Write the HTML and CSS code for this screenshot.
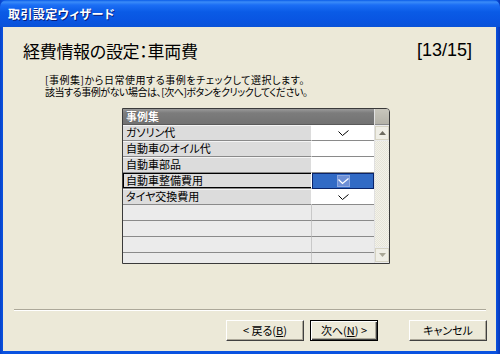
FILE: index.html
```html
<!DOCTYPE html>
<html lang="ja">
<head>
<meta charset="utf-8">
<link rel="stylesheet" href="styles.css">
</head>
<body>
<div class="window">
  <div class="titlebar">取引設定ウィザード</div>
  <div class="client">
    <div class="heading">
      <span class="heading-title">経費情報の設定：車両費</span>
      <span class="heading-step">[13/15]</span>
    </div>
    <p class="instructions"><span class="line line-1">[事例集]から日常使用する事例をチェックして選択します。</span><span class="line line-2">該当する事例がない場合は、[次へ]ボタンをクリックしてください。</span></p>
    <div class="grid">
      <div class="table">
        <div class="row header"><div class="cell name">事例集</div><div class="cell check"></div></div>
        <div class="row data"><div class="cell name">ガソリン代</div><div class="cell check"><svg class="tick" viewBox="0 0 11 7" width="11" height="7"><polyline points="0.5,1.5 4.5,5.5 10.5,0.5" fill="none" stroke="#000" stroke-width="1"/></svg></div></div>
        <div class="row data"><div class="cell name">自動車のオイル代</div><div class="cell check"></div></div>
        <div class="row data"><div class="cell name">自動車部品</div><div class="cell check"></div></div>
        <div class="row data selected"><div class="cell name">自動車整備費用</div><div class="cell check"><span class="checkbox"><svg viewBox="0 0 11 7" width="11" height="7"><polyline points="0.5,1.5 4.5,5.5 10.5,0.5" fill="none" stroke="#fff" stroke-width="1.2"/></svg></span></div></div>
        <div class="row data"><div class="cell name">タイヤ交換費用</div><div class="cell check"><svg class="tick" viewBox="0 0 11 7" width="11" height="7"><polyline points="0.5,1.5 4.5,5.5 10.5,0.5" fill="none" stroke="#000" stroke-width="1"/></svg></div></div>
        <div class="row empty"><div class="cell name"></div><div class="cell check"></div></div>
        <div class="row empty"><div class="cell name"></div><div class="cell check"></div></div>
        <div class="row empty"><div class="cell name"></div><div class="cell check"></div></div>
        <div class="row empty last"><div class="cell name"></div><div class="cell check"></div></div>
      </div>
      <div class="scrollbar">
        <div class="sb-corner"></div>
        <div class="sb-btn"><svg viewBox="0 0 7 4" width="7" height="4"><polygon points="0,4 3.5,0 7,4" fill="#6d6b60"/></svg></div>
        <div class="sb-track"></div>
        <div class="sb-btn"><svg viewBox="0 0 7 4" width="7" height="4"><polygon points="0,0 3.5,4 7,0" fill="#a9a797"/></svg></div>
      </div>
    </div>
    <div class="separator"></div>
    <div class="buttons">
      <button class="btn btn-back">&lt; 戻る(<u>B</u>)</button>
      <button class="btn btn-next">次へ(<u>N</u>) &gt;</button>
      <button class="btn btn-cancel">キャンセル</button>
    </div>
  </div>
</div>
</body>
</html>
```

FILE: styles.css
```css
* { box-sizing: border-box; }
html, body { margin: 0; padding: 0; }
body {
  width: 500px;
  height: 354px;
  overflow: hidden;
  font-family: "Noto Sans CJK JP", "Noto Sans", sans-serif;
  font-feature-settings: "palt";
}
.window {
  width: 500px;
  height: 354px;
  display: flex;
  flex-direction: column;
  background: linear-gradient(to right, #0842c9 0, #0a52e0 3px, #0a52e0 496px, #0636b8 500px);
  padding: 0 4px 3px 3px;
}
.titlebar {
  height: 27px;
  margin: 0 -4px 0 -3px;
  padding: 0 0 0 8px;
  display: flex;
  align-items: center;
  color: #fff;
  font-size: 12px;
  font-weight: bold;
  letter-spacing: 0.4px;
  text-shadow: 1px 1px 0 #0a1e7a;
  background: linear-gradient(to bottom, #0a5ce8 0, #3b8cf8 2px, #1b6ef5 5px, #0a5be6 12px, #0955e2 20px, #0a52d8 27px);
  border-radius: 7px 7px 0 0;
}
.client {
  flex: 1;
  background: #ece9d8;
  display: flex;
  flex-direction: column;
  color: #000;
}
.heading {
  display: flex;
  justify-content: space-between;
  align-items: center;
  margin: 12px 24px 0 20px;
  height: 22px;
}
.heading-title {
  font-size: 17px;
  letter-spacing: -0.3px;
}
.heading-step {
  font-family: "Liberation Sans", Arial, sans-serif;
  font-size: 18px;
  font-feature-settings: normal;
}
.instructions {
  margin: 13px 0 0 42px;
  font-size: 10px;
  line-height: 11.5px;
}
.line { display: block; white-space: nowrap; }
.line-1 { letter-spacing: 0.55px; }
.line-2 { letter-spacing: -0.45px; }
.grid {
  margin: 11px 0 0 119px;
  width: 268px;
  height: 156px;
  display: flex;
  border: 1px solid #3a3a3a;
  border-radius: 0 4px 0 0;
  overflow: hidden;
  background: #ebebeb;
}
.table {
  width: 251px;
  display: flex;
  flex-direction: column;
}
.row {
  display: flex;
  height: 16px;
  flex: none;
}
.cell {
  height: 16px;
  font-size: 11px;
  line-height: 15px;
  white-space: nowrap;
}
.cell.name {
  width: 189px;
  padding-left: 3px;
  border-right: 1px solid #c8c8c8;
}
.cell.check {
  width: 62px;
  display: flex;
  justify-content: center;
  align-items: center;
}
.header .cell {
  background: linear-gradient(to bottom, #9a9a9a 0, #7c7c7c 4px, #727272 15px);
  color: #fff;
  font-weight: bold;
  border-bottom: 1px solid #5a5a5a;
  border-right: none;
  text-shadow: 0 0 1px #333;
}
.data .cell.name {
  background: #dcdcdc;
  border-bottom: 1px solid #8a8a8a;
  box-shadow: inset 0 1px 0 #f4f4f4;
  border-right: 1px solid #ffffff;
}
.data .cell.check {
  background: #fff;
  border-bottom: 1px solid #8a8a8a;
}
.tick { margin-top: 2px; }
.selected .cell.name {
  box-shadow: inset 1px 1px 0 #000, inset 0 -1px 0 #000;
}
.selected .cell.check {
  background: #316ac5;
  border: 1px solid #0a246a;
}
.checkbox {
  width: 13px;
  height: 12px;
  border: 1px solid #8ea8e0;
  background: #6d8fd6;
  display: flex;
  justify-content: center;
  align-items: center;
}
.empty .cell {
  background: #ebebeb;
  border-bottom: 1px solid #8a8a8a;
}
.empty .cell.name { border-right: 1px solid #c8c8c8; }
.empty.last .cell { border-bottom: none; }
.scrollbar {
  width: 15px;
  display: flex;
  flex-direction: column;
  border-left: 1px solid #e0e0e0;
}
.sb-corner {
  height: 16px;
  flex: none;
  background: linear-gradient(to bottom, #c8c6bc, #b4b2a8);
  border-bottom: 1px solid #8a8a8a;
}
.sb-btn {
  height: 14px;
  flex: none;
  display: flex;
  justify-content: center;
  align-items: center;
  background: #efeee6;
  border: 1px solid #d6d3c3;
  margin: 1px 0;
}
.sb-track {
  flex: 1;
  background: repeating-conic-gradient(#f3f2ea 0 25%, #e6e4d8 0 50%) 0 0 / 2px 2px;
}
.separator {
  margin: 45px 10px 0 11px;
  height: 2px;
  border-top: 1px solid #aca899;
  border-bottom: 1px solid #fff;
}
.buttons {
  display: flex;
  margin: 9px 9px 0 0;
  justify-content: flex-end;
  align-items: center;
}
.btn {
  height: 21px;
  font-family: "Noto Sans CJK JP", sans-serif;
  font-feature-settings: "palt";
  font-size: 11px;
  line-height: 15px;
  padding: 0;
  color: #000;
  background: #ece9d8;
  border: 1px solid;
  border-color: #fff #404040 #404040 #fff;
  box-shadow: inset -1px -1px 0 #aca899;
}
.btn u { text-decoration: underline; }
.btn-back { width: 78px; }
.btn-next {
  width: 68px;
  margin-left: 6px;
  border: 1px solid #000;
  box-shadow: inset 1px 1px 0 #fff, inset -1px -1px 0 #404040, inset -2px -2px 0 #aca899;
}
.btn-cancel { width: 78px; margin-left: 31px; }
```
